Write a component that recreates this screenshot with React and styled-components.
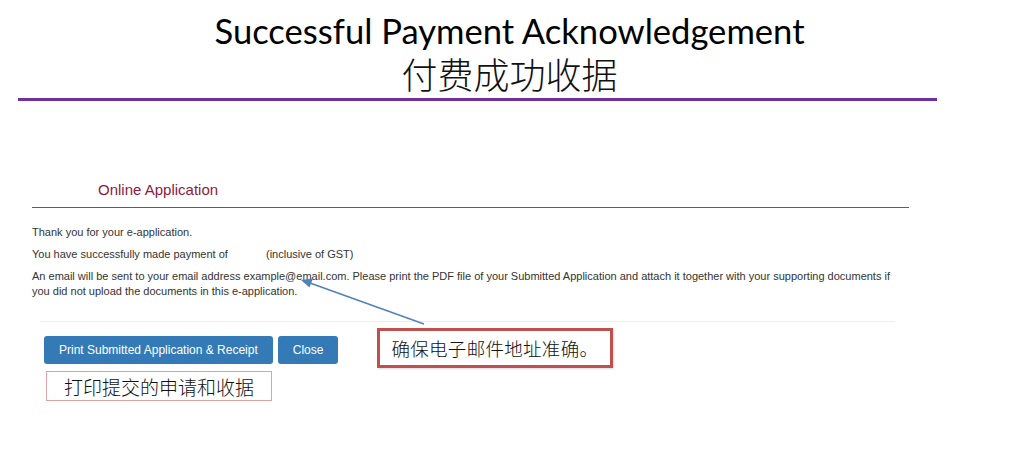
import React from "react";
import styled, { createGlobalStyle } from "styled-components";

const GlobalStyle = createGlobalStyle`
  html, body {
    margin: 0;
    padding: 0;
    background: #ffffff;
  }
  body {
    font-family: "Liberation Sans", Arial, sans-serif;
  }
`;

const Page = styled.div`
  position: relative;
  width: 1019px;
  height: 450px;
  overflow: hidden;
  background: #ffffff;
`;

const Header = styled.header`
  display: flex;
  flex-direction: column;
  align-items: center;
  padding-top: 11px;
`;

const Title = styled.h1`
  margin: 0;
  font-family: Lato, "Open Sans", sans-serif;
  font-weight: 400;
  font-size: 34.6px;
  line-height: 40px;
  color: #000;
`;

const SubTitle = styled.h2`
  margin: 0;
  font-family: "Noto Sans CJK SC", "Noto Sans", sans-serif;
  font-weight: 300;
  font-size: 36px;
  line-height: 44px;
  color: #111;
`;

const PurpleRule = styled.div`
  margin: 3px 0 0 18px;
  width: 919px;
  height: 3px;
  background: #7030a0;
`;

const Panel = styled.section`
  margin: 79px 0 0 32px;
  width: 877px;
`;

const PanelHeading = styled.div`
  padding: 0 0 7px 66px;
  font-size: 15px;
  line-height: 20px;
  color: #8b1a3f;
`;

const HeadingRule = styled.div`
  height: 1px;
  background: #b3325f;
`;

const Body = styled.div`
  padding-top: 17px;
  max-width: 870px;
`;

const Para = styled.p`
  margin: 0 0 7px;
  font-size: 11px;
  line-height: 15px;
  color: #333;
`;

const Amount = styled.span`
  display: inline-block;
  width: 32px;
`;

const Separator = styled.div`
  margin: 22px 0 0 8px;
  width: 855px;
  height: 1px;
  background: #eeeeee;
`;

const ActionRow = styled.div`
  display: flex;
  align-items: flex-start;
  gap: 39px;
  margin: 6px 0 0 12px;
`;

const ActionColumn = styled.div`
  display: flex;
  flex-direction: column;
  padding-top: 8px;
`;

const ButtonRow = styled.div`
  display: flex;
  gap: 5px;
`;

const Button = styled.button`
  height: 28px;
  padding: 0 15px;
  border: none;
  border-radius: 3px;
  background: #337ab7;
  color: #fff;
  font-family: "Liberation Sans", Arial, sans-serif;
  font-size: 12px;
  cursor: pointer;
`;

const NoteBox = styled.div`
  margin: 7px 0 0 2px;
  width: 224px;
  height: 28px;
  border: 1px solid #dba3a6;
  display: flex;
  align-items: center;
  justify-content: center;
  font-family: "Noto Sans CJK SC", sans-serif;
  font-weight: 300;
  font-size: 19px;
  color: #111;
`;

const Callout = styled.div`
  box-sizing: content-box;
  width: 219px;
  height: 34px;
  padding-left: 11px;
  border: 3px solid #c0504d;
  box-shadow: 1px 1px 2px rgba(0, 0, 0, 0.15);
  display: flex;
  align-items: center;
  font-family: "Noto Sans CJK SC", sans-serif;
  font-weight: 300;
  font-size: 18.5px;
  letter-spacing: 0.3px;
  color: #111;
`;

const ArrowLayer = styled.svg`
  position: absolute;
  left: 0;
  top: 0;
  width: 1019px;
  height: 450px;
  pointer-events: none;
`;

export default function App() {
  return (
    <Page>
      <GlobalStyle />
      <Header>
        <Title>Successful Payment Acknowledgement</Title>
        <SubTitle>付费成功收据</SubTitle>
      </Header>
      <PurpleRule />
      <Panel>
        <PanelHeading>Online Application</PanelHeading>
        <HeadingRule />
        <Body>
          <Para>Thank you for your e-application.</Para>
          <Para>
            You have successfully made payment of <Amount /> (inclusive of GST)
          </Para>
          <Para>
            An email will be sent to your email address example@email.com. Please print the PDF file of
            your Submitted Application and attach it together with your supporting documents if you did
            not upload the documents in this e-application.
          </Para>
        </Body>
        <Separator />
        <ActionRow>
          <ActionColumn>
            <ButtonRow>
              <Button>Print Submitted Application &amp; Receipt</Button>
              <Button>Close</Button>
            </ButtonRow>
            <NoteBox>打印提交的申请和收据</NoteBox>
          </ActionColumn>
          <Callout>确保电子邮件地址准确。</Callout>
        </ActionRow>
      </Panel>
      <ArrowLayer viewBox="0 0 1019 450">
        <line x1="424" y1="324" x2="310" y2="283" stroke="#4f81bd" strokeWidth="1.5" />
        <polygon points="301,280 313,278.5 309.5,287.5" fill="#4f81bd" />
      </ArrowLayer>
    </Page>
  );
}
